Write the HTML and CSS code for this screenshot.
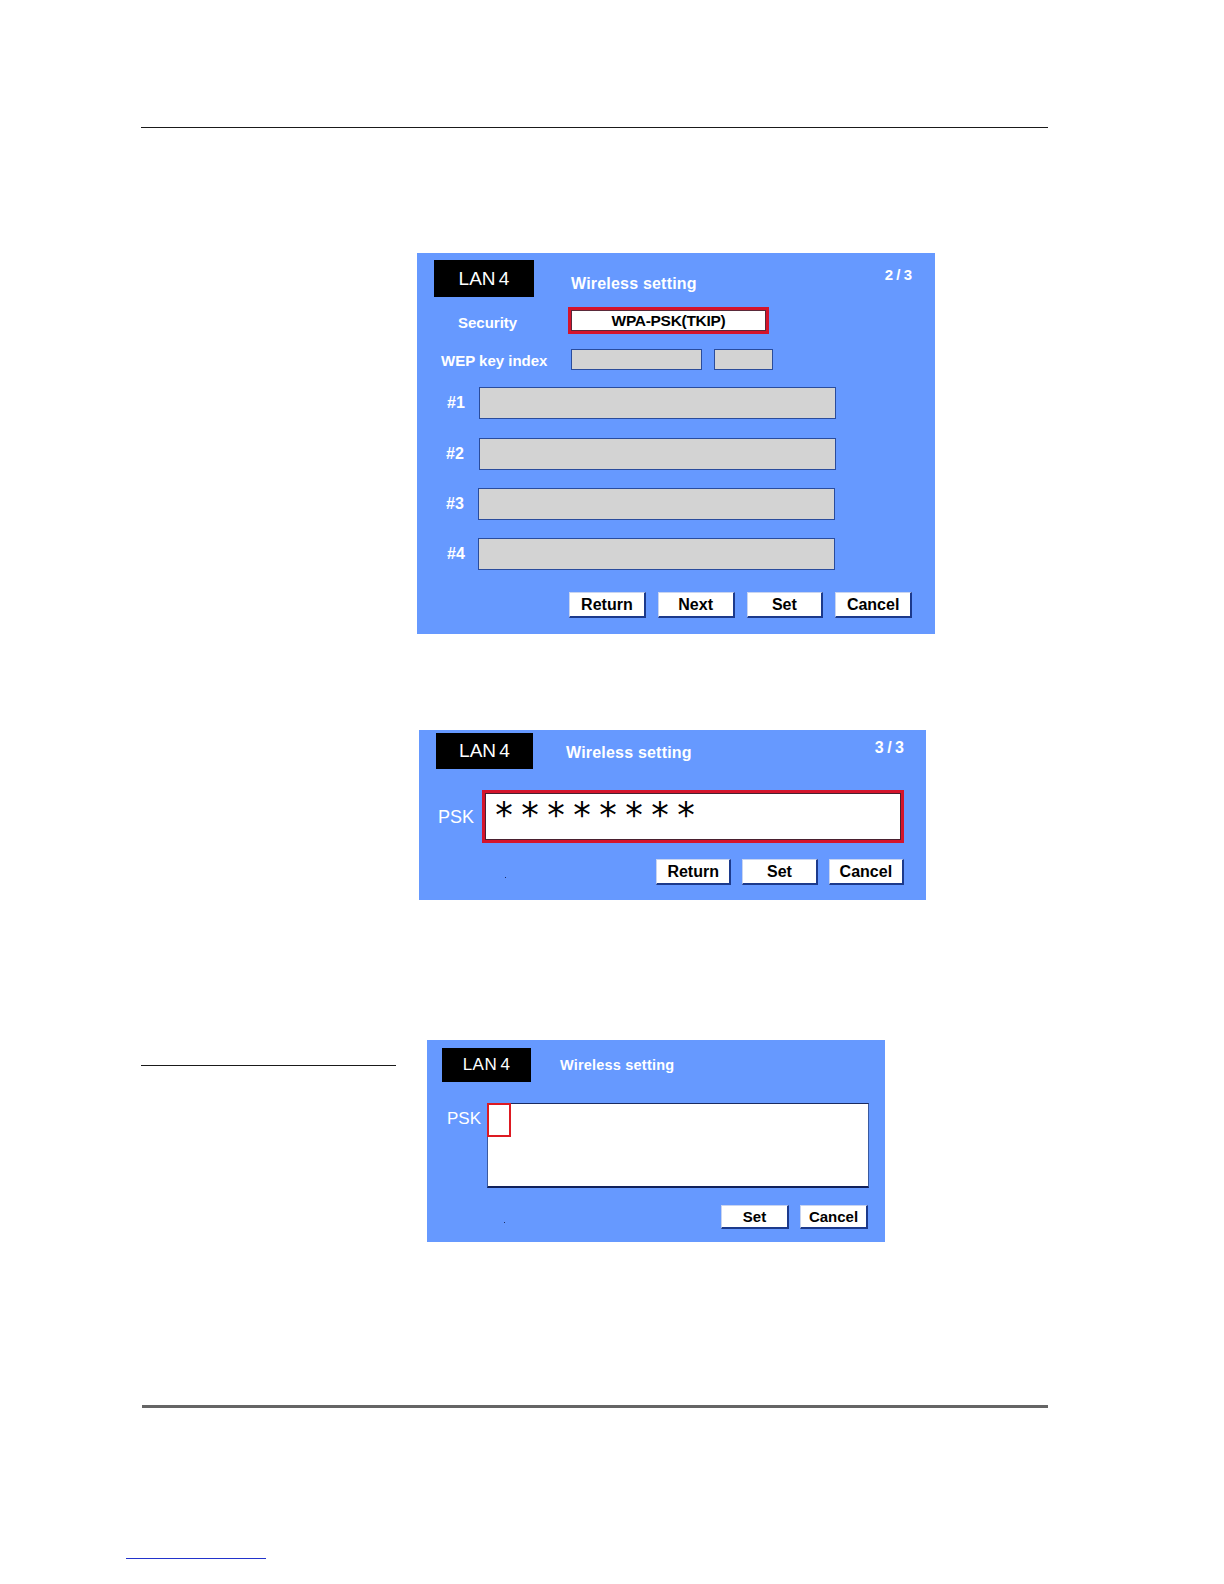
FILE: index.html
```html
<!DOCTYPE html>
<html>
<head>
<meta charset="utf-8">
<title>LAN 4 Wireless setting</title>
<link rel="stylesheet" href="styles.css">
</head>
<body>
<div class="page">
  <div class="rule-top"></div>

  <!-- Panel 1 -->
  <div class="panel p1">
    <div class="hdr">
      <div class="lan">LAN 4</div>
      <div class="title">Wireless setting</div>
      <div class="pg">2 / 3</div>
    </div>
    <div class="row sec-row">
      <div class="lbl sec-lbl">Security</div>
      <div class="sec-box">WPA-PSK(TKIP)</div>
    </div>
    <div class="row wep-row">
      <div class="lbl wep-lbl">WEP key index</div>
      <div class="gbox wep1"></div>
      <div class="gbox wep2"></div>
    </div>
    <div class="row key-row k1">
      <div class="lbl key-lbl">#1</div>
      <div class="gbox keybox"></div>
    </div>
    <div class="row key-row k2">
      <div class="lbl key-lbl">#2</div>
      <div class="gbox keybox"></div>
    </div>
    <div class="row key-row k3">
      <div class="lbl key-lbl">#3</div>
      <div class="gbox keybox"></div>
    </div>
    <div class="row key-row k4">
      <div class="lbl key-lbl">#4</div>
      <div class="gbox keybox"></div>
    </div>
    <div class="btns b1">
      <div class="btn">Return</div>
      <div class="btn">Next</div>
      <div class="btn">Set</div>
      <div class="btn">Cancel</div>
    </div>
  </div>

  <!-- Panel 2 -->
  <div class="panel p2">
    <div class="hdr">
      <div class="lan">LAN 4</div>
      <div class="title">Wireless setting</div>
      <div class="pg">3 / 3</div>
    </div>
    <div class="row psk-row">
      <div class="psk-lbl">PSK</div>
      <div class="psk-box">
        <span class="ast">*</span><span class="ast">*</span><span class="ast">*</span><span class="ast">*</span><span class="ast">*</span><span class="ast">*</span><span class="ast">*</span><span class="ast">*</span>
      </div>
    </div>
    <div class="btns b2">
      <span class="dot"></span>
      <div class="btn">Return</div>
      <div class="btn">Set</div>
      <div class="btn">Cancel</div>
    </div>
  </div>

  <!-- Section 3 -->
  <div class="sec3">
    <div class="rule-mid"></div>
    <div class="panel p3">
      <div class="hdr">
        <div class="lan">LAN 4</div>
        <div class="title">Wireless setting</div>
      </div>
      <div class="row psk-row">
        <div class="psk-lbl">PSK</div>
        <div class="psk-box2">
          <div class="cursor"></div>
        </div>
      </div>
      <div class="btns b3">
        <span class="dot"></span>
        <div class="btn">Set</div>
        <div class="btn">Cancel</div>
      </div>
    </div>
  </div>

  <div class="rule-bottom"></div>
  <div class="foot-link"></div>
</div>
</body>
</html>
```

FILE: styles.css
```css
html, body {
  margin: 0;
  padding: 0;
  background: #ffffff;
}
.page {
  display: flow-root;
  font-family: "Liberation Sans", Arial, sans-serif;
}
.rule-top {
  margin: 127px 0 0 141px;
  width: 907px;
  height: 1px;
  background: #1a1a1a;
}
.panel {
  background: #6699ff;
  color: #ffffff;
  box-sizing: border-box;
}
.hdr {
  display: flex;
  align-items: flex-start;
}
.lan {
  background: #000000;
  color: #ffffff;
  display: flex;
  align-items: center;
  justify-content: center;
  font-weight: normal;
  word-spacing: -2px;
}
.title {
  font-weight: bold;
  letter-spacing: 0.2px;
}
.pg {
  margin-left: auto;
  font-weight: bold;
  word-spacing: -1px;
}
.row {
  display: flex;
  align-items: center;
}
.lbl {
  font-weight: bold;
  font-size: 15px;
}
.gbox {
  background: #d3d3d3;
  border: 1px solid #2a4c9c;
  box-sizing: border-box;
}
.btns {
  display: flex;
  align-items: center;
}
.btn {
  background: #ffffff;
  color: #000000;
  font-weight: bold;
  display: flex;
  align-items: center;
  justify-content: center;
  box-sizing: border-box;
  border-right: 2px solid #1c3a8c;
  border-bottom: 2px solid #1c3a8c;
  border-left: 1px solid #c8d4f0;
  border-top: 1px solid #c8d4f0;
}
.dot {
  width: 1px;
  height: 1px;
  background: #1c2c60;
}

/* Panel 1 */
.p1 {
  margin: 125px 0 0 417px;
  width: 518px;
  height: 381px;
  padding: 7px 23px 0 17px;
}
.p1 .hdr { height: 37px; }
.p1 .lan {
  width: 100px;
  height: 37px;
  font-size: 19px;
}
.p1 .title {
  font-size: 16px;
  margin: 15px 0 0 37px;
}
.p1 .pg {
  font-size: 15px;
  margin-top: 6px;
}
.sec-row {
  margin-top: 10px;
  height: 27px;
}
.sec-lbl {
  margin-left: 24px;
  width: 110px;
  padding-top: 3px;
}
.sec-box {
  width: 201px;
  height: 27px;
  box-sizing: border-box;
  background: #ffffff;
  border: 3px solid #d4142c;
  box-shadow: inset 0 0 0 1px #5a2a3a;
  color: #000000;
  font-weight: bold;
  font-size: 15.5px;
  display: flex;
  align-items: center;
  justify-content: center;
  letter-spacing: -0.3px;
}
.wep-row {
  margin-top: 15px;
  height: 21px;
}
.wep-lbl {
  margin-left: 7px;
  width: 130px;
  padding-top: 2px;
}
.wep1 {
  width: 131px;
  height: 21px;
}
.wep2 {
  margin-left: 12px;
  width: 59px;
  height: 21px;
}
.key-row { height: 32px; }
.k1 { margin-top: 17px; }
.k2 { margin-top: 19px; }
.k3 { margin-top: 18px; }
.k4 { margin-top: 18px; }
.key-lbl {
  width: 32px;
  margin-left: 13px;
  font-size: 16px;
}
.keybox {
  width: 357px;
  height: 32px;
}
.k2 .key-lbl { margin-left: 12px; width: 33px; }
.k3 .key-lbl { margin-left: 12px; width: 32px; }
.k4 .key-lbl { width: 31px; }
.b1 {
  margin-top: 22px;
  margin-left: 135px;
  gap: 12px;
}
.b1 .btn {
  width: 78px;
  height: 26px;
  font-size: 16px;
}

/* Panel 2 */
.p2 {
  margin: 96px 0 0 419px;
  width: 507px;
  height: 170px;
  padding: 3px 22px 0 17px;
}
.p2 .hdr { height: 36px; }
.p2 .lan {
  width: 97px;
  height: 36px;
  font-size: 19px;
}
.p2 .title {
  font-size: 16px;
  margin: 11px 0 0 33px;
}
.p2 .pg {
  font-size: 16px;
  margin-top: 6px;
}
.p2 .psk-row {
  margin-top: 21px;
  align-items: flex-start;
}
.psk-lbl {
  font-size: 18px;
  font-weight: normal;
}
.p2 .psk-lbl {
  margin: 17px 0 0 2px;
  width: 45px;
}
.psk-box {
  width: 427px;
  height: 53px;
  box-sizing: border-box;
  background: #ffffff;
  border: 3px solid #d4142c;
  box-shadow: inset 0 0 0 1px #4a2030;
  display: flex;
  align-items: flex-start;
  gap: 7px;
  padding: 5px 0 0 9px;
}
.ast {
  font-family: "DejaVu Sans", sans-serif;
  font-size: 35px;
  line-height: 34px;
  color: #000000;
  width: 19px;
  text-align: center;
}
.b2 {
  margin-top: 16px;
}
.b2 .dot { margin: 10px 0 0 69px; }
.b2 .btn {
  width: 77px;
  height: 26px;
  font-size: 16px;
  margin-left: 11px;
}
.b2 .btn:first-of-type { margin-left: 150px; }

/* Section 3 */
.sec3 {
  display: flex;
  align-items: flex-start;
  margin-top: 140px;
}
.rule-mid {
  margin: 25px 0 0 141px;
  width: 255px;
  height: 1px;
  background: #1a1a1a;
}
.p3 {
  margin-left: 31px;
  width: 458px;
  height: 202px;
  padding: 8px 16px 0 15px;
}
.p3 .hdr { height: 34px; }
.p3 .lan {
  width: 89px;
  height: 34px;
  font-size: 17px;
  letter-spacing: 0.5px;
}
.p3 .title {
  font-size: 14.5px;
  margin: 9px 0 0 29px;
}
.p3 .psk-row {
  margin-top: 21px;
  align-items: flex-start;
}
.p3 .psk-lbl {
  font-size: 17px;
  margin: 6px 0 0 5px;
  width: 40px;
}
.psk-box2 {
  width: 382px;
  height: 85px;
  box-sizing: border-box;
  background: #ffffff;
  border-top: 1px solid #1a2a60;
  border-left: 1px solid #3a5aa0;
  border-right: 1px solid #3a5aa0;
  border-bottom: 2px solid #10205a;
}
.cursor {
  margin: -1px 0 0 -1px;
  width: 24px;
  height: 34px;
  box-sizing: border-box;
  border: 2px solid #dd1a22;
}
.b3 {
  margin-top: 17px;
}
.b3 .dot { margin: 10px 0 0 62px; }
.b3 .btn {
  width: 68px;
  height: 24px;
  font-size: 15px;
  margin-left: 11px;
}
.b3 .btn:first-of-type { margin-left: 216px; }

.rule-bottom {
  margin: 163px 0 0 142px;
  width: 906px;
  height: 3px;
  background: #656565;
}
.foot-link {
  margin: 150px 0 0 126px;
  width: 140px;
  height: 1px;
  background: #2233cc;
}
```
